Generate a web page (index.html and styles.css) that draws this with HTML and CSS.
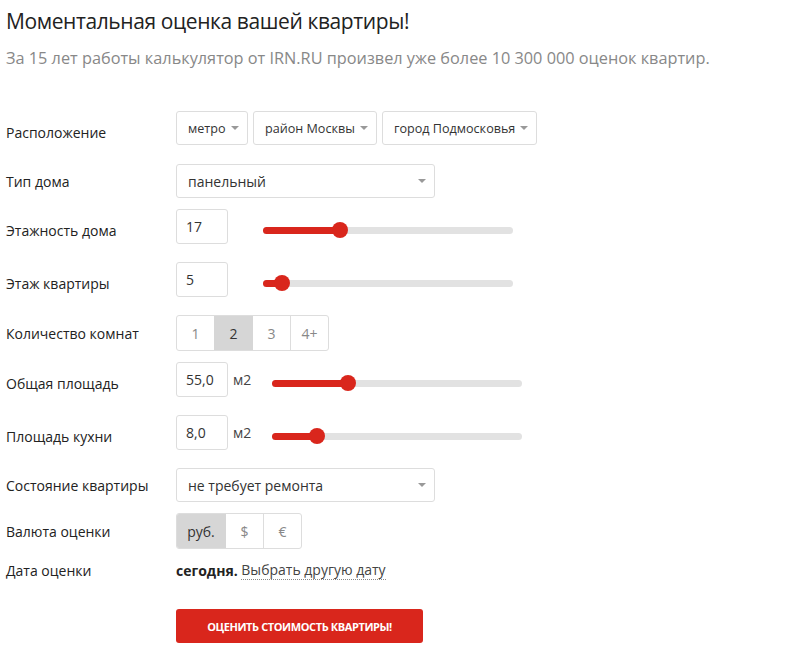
FILE: index.html
```html
<!DOCTYPE html>
<html lang="ru">
<head>
    <meta charset="UTF-8">
    <meta name="viewport" content="width=device-width, initial-scale=1.0">
    <title>Оценка квартиры</title>
    <link rel="stylesheet" href="styles.css">
</head>
<body>
    <div class="Page">
        <h1 class="Title">Моментальная оценка вашей квартиры!</h1>
        <p class="Lead">За 15 лет работы калькулятор от IRN.RU произвел уже более 10 300 000 оценок квартир.</p>

        <div class="Form">
            <div class="Row Tall">
                <div class="Label">Расположение</div>
                <div class="Controls">
                    <div class="Select Metro"><span>метро</span><i class="Arrow"></i></div>
                    <div class="Select District"><span>район Москвы</span><i class="Arrow"></i></div>
                    <div class="Select Town"><span>город Подмосковья</span><i class="Arrow"></i></div>
                </div>
            </div>

            <div class="Row">
                <div class="Label">Тип дома</div>
                <div class="Controls">
                    <div class="Select Wide"><span>панельный</span><i class="Arrow"></i></div>
                </div>
            </div>

            <div class="Row Tall">
                <div class="Label">Этажность дома</div>
                <div class="Controls">
                    <div class="Field">17</div>
                    <div class="Slider"><div class="Fill" style="width: 30.8%"></div></div>
                </div>
            </div>

            <div class="Row Tall">
                <div class="Label">Этаж квартиры</div>
                <div class="Controls">
                    <div class="Field">5</div>
                    <div class="Slider"><div class="Fill" style="width: 7.6%"></div></div>
                </div>
            </div>

            <div class="Row">
                <div class="Label">Количество комнат</div>
                <div class="Controls">
                    <div class="Group">
                        <span class="Opt">1</span>
                        <span class="Opt Active">2</span>
                        <span class="Opt">3</span>
                        <span class="Opt">4+</span>
                    </div>
                </div>
            </div>

            <div class="Row Tall">
                <div class="Label">Общая площадь</div>
                <div class="Controls">
                    <div class="Field">55,0</div>
                    <span class="Unit">м2</span>
                    <div class="Slider Short"><div class="Fill" style="width: 30.4%"></div></div>
                </div>
            </div>

            <div class="Row Tall">
                <div class="Label">Площадь кухни</div>
                <div class="Controls">
                    <div class="Field">8,0</div>
                    <span class="Unit">м2</span>
                    <div class="Slider Short"><div class="Fill" style="width: 18%"></div></div>
                </div>
            </div>

            <div class="Row">
                <div class="Label">Состояние квартиры</div>
                <div class="Controls">
                    <div class="Select Wide"><span>не требует ремонта</span><i class="Arrow"></i></div>
                </div>
            </div>

            <div class="Row">
                <div class="Label">Валюта оценки</div>
                <div class="Controls">
                    <div class="Group">
                        <span class="Opt Rub Active">руб.</span>
                        <span class="Opt">$</span>
                        <span class="Opt">€</span>
                    </div>
                </div>
            </div>

            <div class="Row Date">
                <div class="Label">Дата оценки</div>
                <div class="Controls">
                    <b>сегодня.</b>&nbsp;<a class="Pick" href="#">Выбрать другую дату</a>
                </div>
            </div>

            <div class="Submit">
                <button class="SubmitBtn" type="button">Оценить стоимость квартиры!</button>
            </div>
        </div>
    </div>
</body>
</html>
```

FILE: styles.css
```css
body, html {
    margin: 0;
    background-color: #fff;
    color: #222;
    font-family: "Open Sans", "Noto Sans", sans-serif;
}

.Page {
    padding: 6px 6px 0 6px;
}

.Title {
    font-size: 21px;
    font-weight: 400;
    letter-spacing: -0.4px;
    line-height: 30px;
    margin: 0;
    color: #222;
}

.Lead {
    font-size: 16.3px;
    color: #888;
    margin: 11px 0 0 0;
    line-height: 22px;
}

.Form {
    margin-top: 42px;
}

.Row {
    display: flex;
    align-items: center;
    margin-bottom: 11px;
    font-size: 14px;
}

.Row.Tall {
    height: 42px;
    align-items: flex-start;
}

.Row.Tall .Label {
    align-self: center;
}

.Row.Tall .Controls {
    align-items: flex-start;
}

.Row.Tall .Slider {
    align-self: center;
}

.Label {
    width: 170px;
    flex: none;
}

.Controls {
    display: flex;
    align-items: center;
    height: 100%;
}

.Select {
    display: flex;
    align-items: center;
    justify-content: space-between;
    height: 34px;
    box-sizing: border-box;
    border: 1px solid #ddd;
    border-radius: 3px;
    padding: 0 8px 0 11px;
    margin-right: 5px;
    font-size: 12.6px;
    color: #333;
}

.Select.Metro {
    width: 72px;
}

.Select.District {
    width: 124px;
}

.Select.Town {
    width: 155px;
}

.Select.Wide {
    width: 259px;
    font-size: 14px;
}

.Arrow {
    width: 0;
    height: 0;
    border-left: 4px solid transparent;
    border-right: 4px solid transparent;
    border-top: 4px solid #999;
}

.Field {
    width: 52px;
    height: 35px;
    box-sizing: border-box;
    border: 1px solid #ddd;
    border-radius: 3px;
    padding: 0 9px;
    line-height: 33px;
    font-size: 14px;
    color: #333;
}

.Unit {
    margin-left: 5px;
    color: #444;
    line-height: 35px;
}

.Slider {
    position: relative;
    width: 250px;
    height: 7px;
    border-radius: 4px;
    background: #e2e2e2;
    margin-left: 35px;
}

.Slider.Short {
    margin-left: 21px;
}

.Fill {
    height: 100%;
    border-radius: 4px;
    background: #d9261c;
    position: relative;
}

.Fill::after {
    content: "";
    position: absolute;
    right: -8px;
    top: -4.5px;
    width: 16px;
    height: 16px;
    border-radius: 50%;
    background: #d9261c;
}

.Group {
    display: flex;
    height: 36px;
    box-sizing: border-box;
    border: 1px solid #ddd;
    border-radius: 3px;
    overflow: hidden;
}

.Opt {
    width: 37px;
    display: flex;
    align-items: center;
    justify-content: center;
    color: #888;
    font-size: 14px;
    border-left: 1px solid #ddd;
}

.Opt:first-child {
    border-left: none;
}

.Opt.Active {
    background: #d6d6d6;
    color: #333;
    border-left-color: #d6d6d6;
}

.Opt.Active + .Opt {
    border-left-color: #d6d6d6;
}

.Opt.Rub {
    width: 48px;
}

.Row.Date {
    margin-top: 11px;
}

.Pick {
    color: #444;
    text-decoration: none;
    border-bottom: 1px dotted #888;
}

.Submit {
    padding-left: 170px;
    margin-top: 29px;
}

.SubmitBtn {
    width: 247px;
    height: 34px;
    border: none;
    border-radius: 3px;
    background: #d9261c;
    color: #fff;
    font-family: "Open Sans", sans-serif;
    font-weight: 700;
    font-size: 11px;
    letter-spacing: -0.4px;
    text-transform: uppercase;
    cursor: pointer;
}
```
